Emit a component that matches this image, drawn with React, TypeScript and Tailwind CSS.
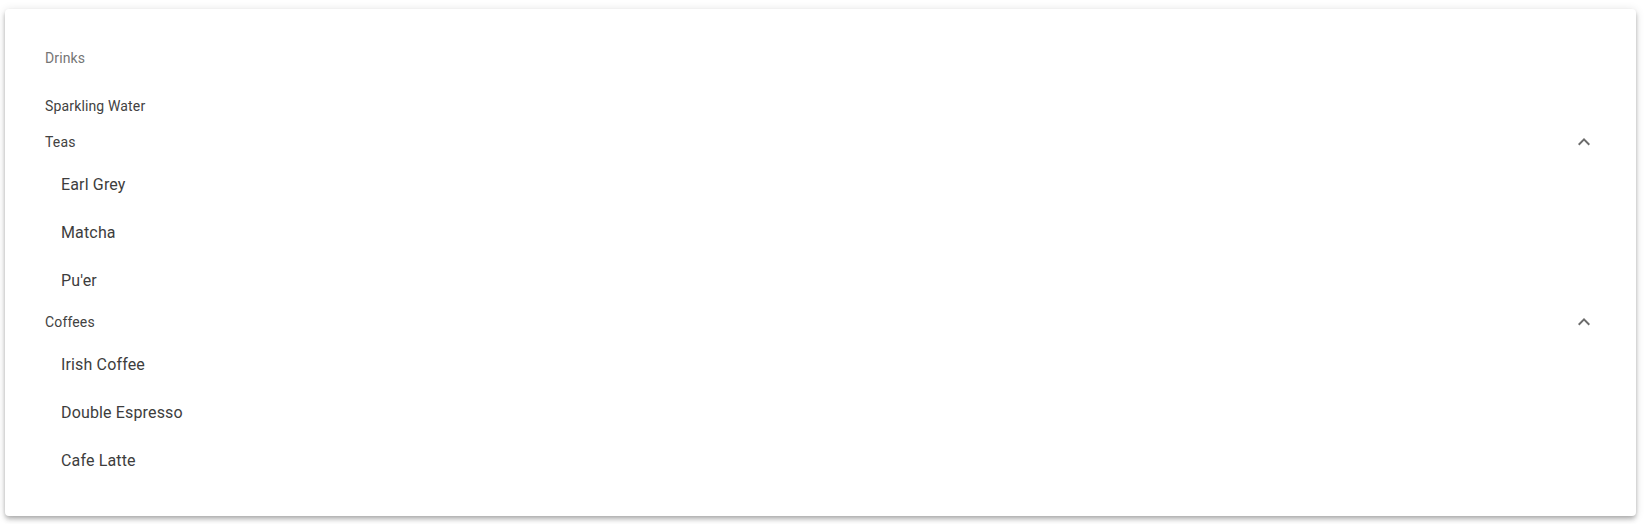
const teas = ["Earl Grey", "Matcha", "Pu'er"];
const coffees = ["Irish Coffee", "Double Espresso", "Cafe Latte"];

function ExpandLess() {
  return (
    <svg viewBox="0 0 24 24" className="w-6 h-6 fill-[#6b6b6b]">
      <path d="M12 8l-6 6 1.41 1.41L12 10.83l4.59 4.58L18 14z" />
    </svg>
  );
}

function Group({ title, items }: { title: string; items: string[] }) {
  return (
    <div>
      <div className="h-9 flex items-center justify-between text-[14px] tracking-[0.15px] text-[#424242]">
        <span>{title}</span>
        <ExpandLess />
      </div>
      {items.map((item) => (
        <div key={item} className="h-12 flex items-center pl-4 pt-[2px] text-[16px] tracking-[0.15px] text-[#3d3d3d]">
          {item}
        </div>
      ))}
    </div>
  );
}

export default function App() {
  return (
    <div className="bg-white w-[1647px] h-[524px] pt-[9px] pl-[5px] pr-[11px]">
      <div
        className="bg-white rounded h-[507px] px-10 pt-10 shadow-[0_2px_4px_-1px_rgba(0,0,0,0.2),0_4px_5px_0_rgba(0,0,0,0.14),0_1px_10px_0_rgba(0,0,0,0.12)]"
        style={{ fontFamily: "Roboto, 'Noto Sans', sans-serif" }}
      >
        <div className="h-[18px] flex items-center text-[14px] tracking-[0.1px] text-[#757575]">Drinks</div>
        <div className="mt-[21px] h-9 flex items-center text-[14px] tracking-[0.15px] text-[#424242]">Sparkling Water</div>
        <Group title="Teas" items={teas} />
        <Group title="Coffees" items={coffees} />
      </div>
    </div>
  );
}
